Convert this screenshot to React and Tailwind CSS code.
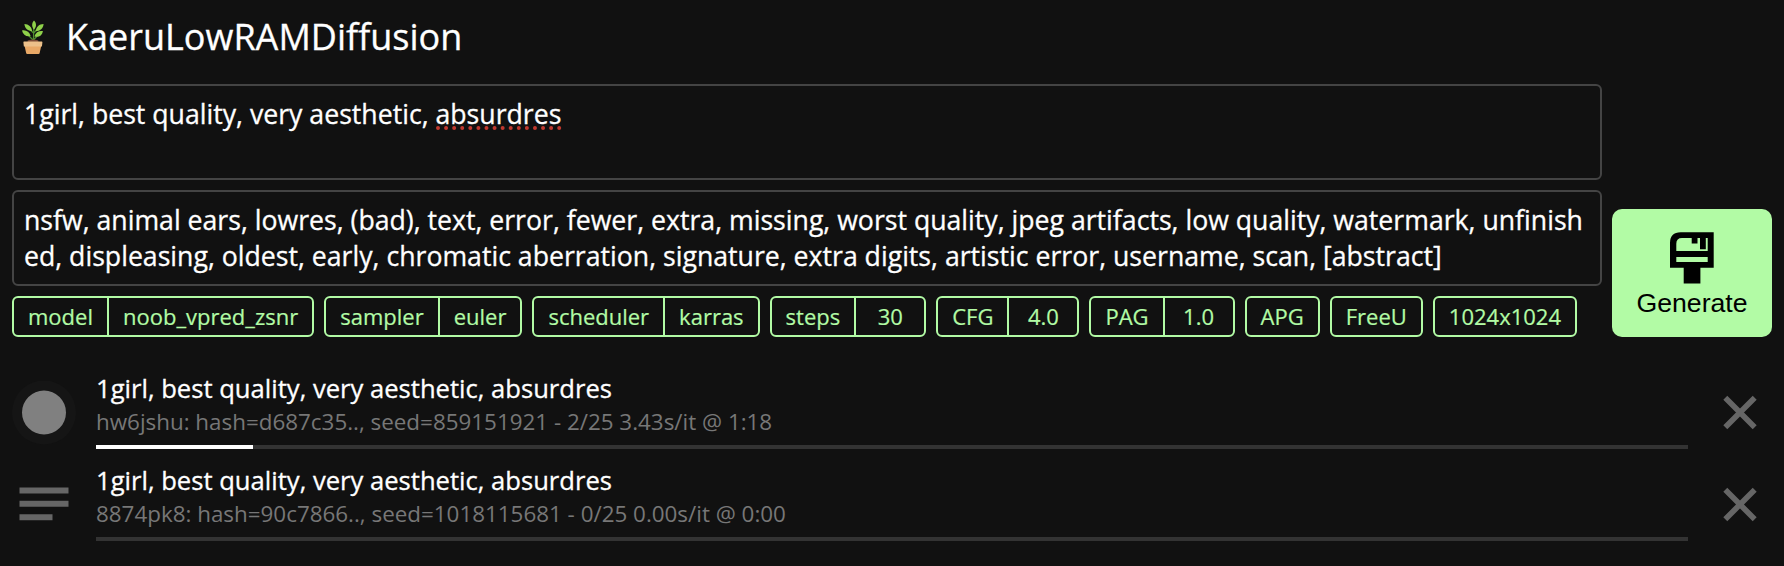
const chips = [
  { label: "model", value: "noob_vpred_zsnr" },
  { label: "sampler", value: "euler" },
  { label: "scheduler", value: "karras" },
  { label: "steps", value: "30", numeric: true },
  { label: "CFG", value: "4.0", numeric: true },
  { label: "PAG", value: "1.0", numeric: true },
  { label: "APG" },
  { label: "FreeU" },
  { label: "1024x1024" },
];

const jobs = [
  {
    title: "1girl, best quality, very aesthetic, absurdres",
    info: "hw6jshu: hash=d687c35.., seed=859151921 - 2/25 3.43s/it @ 1:18",
    progress: 157,
    running: true,
  },
  {
    title: "1girl, best quality, very aesthetic, absurdres",
    info: "8874pk8: hash=90c7866.., seed=1018115681 - 0/25 0.00s/it @ 0:00",
    progress: 0,
    running: false,
  },
];

function PlantIcon() {
  return (
    <svg className="h-[36px] w-[24px]" viewBox="0 0 24 36">
      <path d="M12.400 23 12.800 8M12 21 6 15M12.500 21 18 15M12.500 14 6 8M12.800 14 18 8" stroke="#4f8f2f" strokeWidth="1.200" fill="none" />
      <g fill="#8fd14a">
        <path d="M13 1.600c2.600 2.400 2.800 6.400 0 9-2.400-2.600-2.400-6.600 0-9z" />
        <path d="M3.400 5c4.200.2 7.200 2.600 7.800 7-4.200 0-7.400-2.600-7.800-7z" />
        <path d="M22.600 5c-4.400 0-7.400 2.800-7.800 7.200 4.400 0 7.400-2.800 7.800-7.200z" />
        <path d="M1 11.400c4.200-.8 7.400 1.400 8.600 5.600-4.200 1.200-7.400-1-8.600-5.600z" />
        <path d="M22 12.200c-4.200-.6-7.200 1-8.600 5.200 4 1.400 7.400-.4 8.600-5.200z" />
      </g>
      <ellipse cx="12" cy="22.200" rx="5.600" ry="1.800" fill="#7a4a36" />
      <path d="M3.600 27h16.600l-1.600 7.200q-.2.800-1 .8H6.200q-.8 0-1-.8z" fill="#e8a866" />
      <path d="M3 22.600h17.800q.6 0 .6.600l-.4 3.800q0 .6-.6.600H3.400q-.6 0-.6-.6l-.4-3.800q0-.6.6-.6z" fill="#ecc08a" />
    </svg>
  );
}

function BrushIcon() {
  return (
    <svg className="h-[64px] w-[64px]" viewBox="0 0 64 64" fill="#000">
      <path
        fillRule="evenodd"
        d="M20.700 7.200H53.700V42.800H40.400V58.600H23.700V42.800H10V17.800Q10 7.200 20.700 7.200zM22 13Q16.300 13 16.300 18.800V26H47.700V13H45.800V24.200H40V13H37.500V18.500H31.700V13zM16.300 32V36.900H47.700V32z"
      />
    </svg>
  );
}

function StatusIcon({ running }) {
  if (running) {
    return (
      <svg className="size-16" viewBox="0 0 64 64">
        <circle cx="32" cy="31.500" r="32" fill="#151515" />
        <circle cx="32" cy="31.500" r="22" fill="#808080" />
      </svg>
    );
  }
  return (
    <svg className="size-16" viewBox="0 0 64 64" fill="#666">
      <path d="M7.500 14.400h49v6h-49zM7.500 27.800h49v6h-49zM7.500 41.200h33v6h-33z" />
    </svg>
  );
}

function CloseIcon() {
  return (
    <svg className="size-16" viewBox="0 0 64 64">
      <path d="M17.300 17.300 46.700 46.700M46.700 17.300 17.300 46.700" transform="translate(0 -.5)" stroke="#666" strokeWidth="5.600" />
    </svg>
  );
}

function PromptBox({ children }) {
  return (
    <div className="h-24 w-[1590px] break-all rounded-md border-2 border-[#444] p-[10px] text-[26.667px] leading-[36px] [-webkit-text-stroke:0.3px]">
      {children}
    </div>
  );
}

export default function App() {
  return (
    <div className="h-[566px] w-[1784px] overflow-hidden bg-[#111] px-3 font-['Open_Sans',sans-serif] text-white">
      <header className="flex h-[84px] items-start gap-[21px] pl-[9px] pt-[19px]">
        <PlantIcon />
        <h1 className="-mt-[7px] text-[36px] leading-[49px] [-webkit-text-stroke:0.3px]">KaeruLowRAMDiffusion</h1>
      </header>

      <section className="flex h-[253px] items-end justify-between">
        <div className="flex flex-col gap-[10px]">
          <PromptBox>
            1girl, best quality, very aesthetic,{" "}
            <span className="relative">
              absurdres
              <svg className="absolute bottom-0 left-0 h-[4px] w-full overflow-visible">
                <line x1="2" y1="0" x2="124" y2="0" stroke="#c0392f" strokeWidth="4" strokeLinecap="round" strokeDasharray="0 8.080" />
              </svg>
            </span>
          </PromptBox>
          <PromptBox>
            nsfw, animal ears, lowres, (bad), text, error, fewer, extra, missing, worst quality, jpeg artifacts, low
            quality, watermark, unfinished, displeasing, oldest, early, chromatic aberration, signature, extra digits,
            artistic error, username, scan, [abstract]
          </PromptBox>
          <div className="flex h-[41px] gap-[10px] text-[22px] leading-[36px] text-[#b2fba5] [-webkit-text-stroke:0.2px]">
            {chips.map((chip) => (
              <div key={chip.label} className="flex rounded-md border-2 border-[#b2fba5]">
                <span className="px-[14px]">{chip.label}</span>
                {chip.value && (
                  <span
                    className={
                      chip.numeric
                        ? "w-[70px] border-l-2 border-[#b2fba5] text-center"
                        : "border-l-2 border-[#b2fba5] px-[14px]"
                    }
                  >
                    {chip.value}
                  </span>
                )}
              </div>
            ))}
          </div>
        </div>
        <button className="flex h-32 w-40 flex-col items-center rounded-[10px] bg-[#b2fba5] pt-4 font-['Liberation_Sans',Arial,sans-serif] text-[26.667px] leading-[30px] text-black">
          <BrushIcon />
          <span className="-mt-[1px]">Generate</span>
        </button>
      </section>

      <main className="flex flex-col pt-[32px]">
        {jobs.map((job) => (
          <article key={job.info} className="flex h-[92px] gap-5">
            <div className="pt-3">
              <StatusIcon running={job.running} />
            </div>
            <div className="w-[1592px] pt-[2px]">
              <h2 className="text-[25.600px] leading-[35px] [-webkit-text-stroke:0.3px]">{job.title}</h2>
              <p className="mt-[1px] text-[22.400px] leading-[30px] text-[#777]">{job.info}</p>
              <div className="mt-[8px] h-1 bg-[#333]">
                <div className="h-1 bg-white" style={{ width: job.progress }} />
              </div>
            </div>
            <div className="pt-3">
              <CloseIcon />
            </div>
          </article>
        ))}
      </main>
    </div>
  );
}
